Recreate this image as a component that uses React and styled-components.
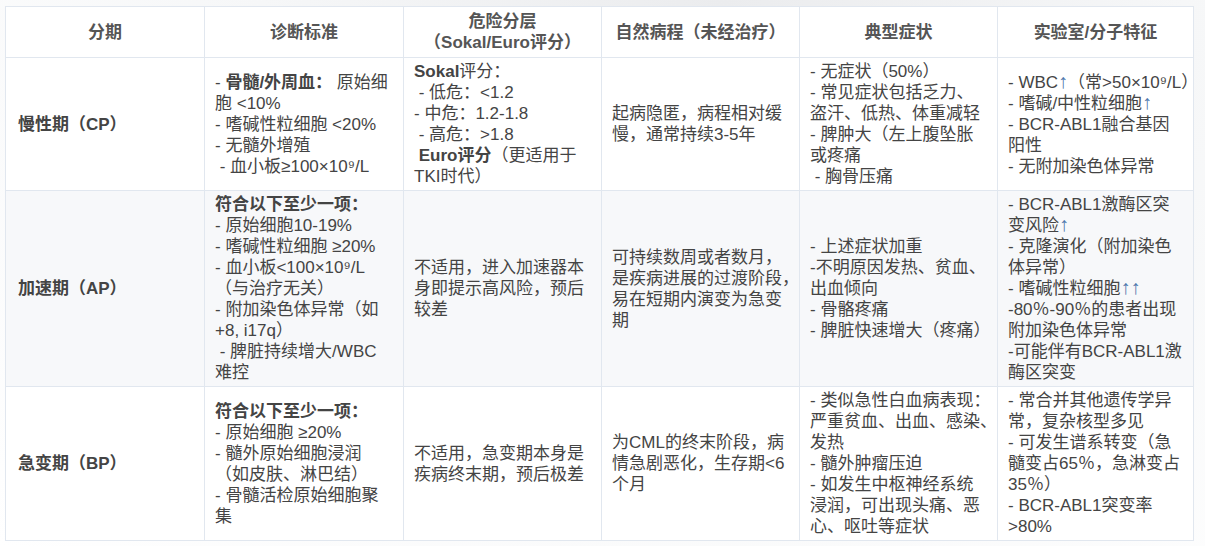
import React from 'react';
import styled, { createGlobalStyle } from 'styled-components';

const GlobalStyle = createGlobalStyle`
    html, body {
        margin: 0;
        padding: 0;
    }
    body {
        background: radial-gradient(ellipse at 60% 0%, #ebecee 0%, #f6f7f8 45%, #ffffff 100%);
        font-family: "Liberation Sans", "Noto Sans CJK SC", sans-serif;
        color: #444;
    }
`;

const Page = styled.div`
    padding: 6px 5px;
`;

const Table = styled.table`
    width: 1188px;
    table-layout: fixed;
    border-collapse: collapse;
    background: #ffffff;
    font-size: 17px;
    line-height: 21px;
`;

const Col = styled.col`
    width: ${props => props.$w}px;
`;

const Th = styled.th`
    border: 1px solid #e1e7ef;
    padding: 4px 10px;
    font-weight: 700;
    color: #555;
    text-align: center;
    vertical-align: middle;
`;

const Row = styled.tr`
    background: ${props => (props.$shaded ? '#f7f8fa' : '#ffffff')};
`;

const Td = styled.td`
    border: 1px solid #e1e7ef;
    padding: 3px 10px;
    vertical-align: middle;
    text-align: left;
    color: #444;
`;

const StageTd = styled(Td)`
    padding-left: 12px;
    font-weight: 700;
`;

const Line = styled.div``;

// keeps a line whole where the original lets end punctuation hang
const Keep = styled.span`
    white-space: nowrap;
`;

const B = styled.b`
    font-weight: 700;
`;

const Up = styled.span`
    color: #4f78ad;
    font-size: 20px;
    line-height: 0;
`;

const sp = '\u00a0';

const widths = [199, 199, 198, 198, 198, 196];

const rows = [
    {
        stage: '慢性期（CP）',
        diag: [
            <>- <B>骨髓/外周血：</B> 原始细胞 &lt;10%</>,
            '- 嗜碱性粒细胞 <20%',
            '- 无髓外增殖',
            `${sp}- 血小板≥100×10⁹/L`,
        ],
        risk: [
            <><B>Sokal</B>评分：</>,
            `${sp}- 低危：<1.2`,
            '- 中危：1.2-1.8',
            `${sp}- 高危：>1.8`,
            <>{sp}<B>Euro评分</B>（更适用于TKI时代）</>,
        ],
        course: ['起病隐匿，病程相对缓慢，通常持续3-5年'],
        symptoms: [
            '- 无症状（50%）',
            '- 常见症状包括乏力、盗汗、低热、体重减轻',
            '- 脾肿大（左上腹坠胀或疼痛',
            `${sp}- 胸骨压痛`,
        ],
        lab: [
            <Keep>- WBC<Up>↑</Up>（常&gt;50×10⁹/L）</Keep>,
            <>- 嗜碱/中性粒细胞<Up>↑</Up></>,
            '- BCR-ABL1融合基因阳性',
            '- 无附加染色体异常',
        ],
    },
    {
        stage: '加速期（AP）',
        shaded: true,
        diag: [
            <B>符合以下至少一项：</B>,
            '- 原始细胞10-19%',
            '- 嗜碱性粒细胞 ≥20%',
            '- 血小板<100×10⁹/L（与治疗无关）',
            '- 附加染色体异常（如+8, i17q）',
            `${sp}- 脾脏持续增大/WBC难控`,
        ],
        risk: ['不适用，进入加速器本身即提示高风险，预后较差'],
        course: [
            <Keep>可持续数周或者数月，</Keep>,
            <Keep>是疾病进展的过渡阶段，</Keep>,
            '易在短期内演变为急变期',
        ],
        symptoms: [
            '- 上述症状加重',
            '-不明原因发热、贫血、出血倾向',
            '- 骨骼疼痛',
            '- 脾脏快速增大（疼痛）',
        ],
        lab: [
            <>- BCR-ABL1激酶区突变风险<Up>↑</Up></>,
            '- 克隆演化（附加染色体异常）',
            <>- 嗜碱性粒细胞<Up>↑↑</Up></>,
            '-80％-90％的患者出现附加染色体异常',
            '-可能伴有BCR-ABL1激酶区突变',
        ],
    },
    {
        stage: '急变期（BP）',
        diag: [
            <B>符合以下至少一项：</B>,
            '- 原始细胞 ≥20%',
            '- 髓外原始细胞浸润（如皮肤、淋巴结）',
            '- 骨髓活检原始细胞聚集',
        ],
        risk: ['不适用，急变期本身是疾病终末期，预后极差'],
        course: ['为CML的终末阶段，病情急剧恶化，生存期<6个月'],
        symptoms: [
            <Keep>- 类似急性白血病表现：</Keep>,
            <Keep>严重贫血、出血、感染、</Keep>,
            '发热',
            '- 髓外肿瘤压迫',
            '- 如发生中枢神经系统浸润，可出现头痛、恶心、呕吐等症状',
        ],
        lab: [
            '- 常合并其他遗传学异常，复杂核型多见',
            '- 可发生谱系转变（急髓变占65％，急淋变占35％）',
            '- BCR-ABL1突变率>80%',
        ],
    },
];

function Cell({ lines }) {
    return (
        <Td>
            {lines.map((l, i) => (
                <Line key={i}>{l}</Line>
            ))}
        </Td>
    );
}

export default function App() {
    return (
        <Page>
            <GlobalStyle />
            <Table>
                <colgroup>
                    {widths.map((w, i) => (
                        <Col key={i} $w={w} />
                    ))}
                </colgroup>
                <thead>
                    <tr>
                        <Th>分期</Th>
                        <Th>诊断标准</Th>
                        <Th>危险分层<br />（Sokal/Euro评分）</Th>
                        <Th>自然病程（未经治疗）</Th>
                        <Th>典型症状</Th>
                        <Th>实验室/分子特征</Th>
                    </tr>
                </thead>
                <tbody>
                    {rows.map(r => (
                        <Row key={r.stage} $shaded={r.shaded}>
                            <StageTd>{r.stage}</StageTd>
                            <Cell lines={r.diag} />
                            <Cell lines={r.risk} />
                            <Cell lines={r.course} />
                            <Cell lines={r.symptoms} />
                            <Cell lines={r.lab} />
                        </Row>
                    ))}
                </tbody>
            </Table>
        </Page>
    );
}
